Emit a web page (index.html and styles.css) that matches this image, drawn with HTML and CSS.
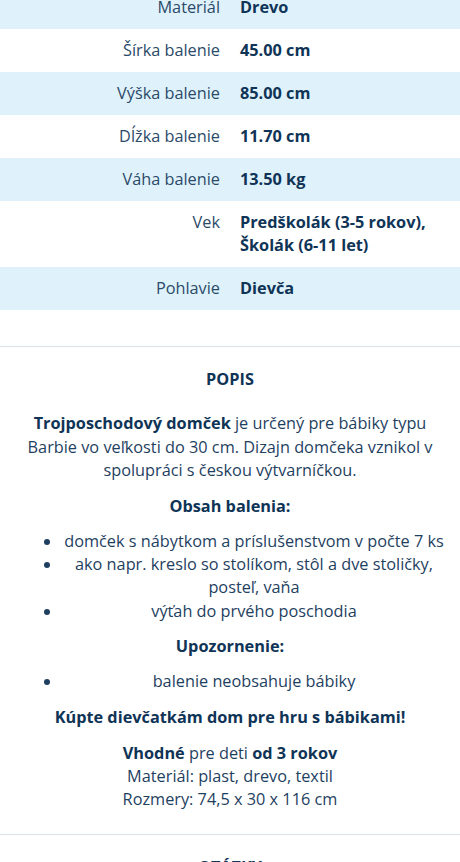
FILE: index.html
```html
<!DOCTYPE html>
<html lang="sk">
<head>
<meta charset="UTF-8"/>
<meta name="viewport" content="width=device-width, initial-scale=1.0"/>
<title>Trojposchodový domček</title>
<link rel="stylesheet" href="styles.css">
</head>
<body>
<div class="params">
  <div class="row alt"><div class="label">Materiál</div><div class="value">Drevo</div></div>
  <div class="row"><div class="label">Šírka balenie</div><div class="value">45.00 cm</div></div>
  <div class="row alt"><div class="label">Výška balenie</div><div class="value">85.00 cm</div></div>
  <div class="row"><div class="label">Dĺžka balenie</div><div class="value">11.70 cm</div></div>
  <div class="row alt"><div class="label">Váha balenie</div><div class="value">13.50 kg</div></div>
  <div class="row"><div class="label">Vek</div><div class="value">Predškolák (3-5 rokov), Školák (6-11 let)</div></div>
  <div class="row alt"><div class="label">Pohlavie</div><div class="value">Dievča</div></div>
</div>

<section class="desc">
  <h2>POPIS</h2>
  <p><strong>Trojposchodový domček</strong> je určený pre bábiky typu Barbie vo veľkosti do 30 cm. Dizajn domčeka vznikol v spolupráci s českou výtvarníčkou.</p>
  <h3>Obsah balenia:</h3>
  <ul>
    <li>domček s nábytkom a príslušenstvom v počte 7 ks</li>
    <li>ako napr. kreslo so stolíkom, stôl a dve stoličky, posteľ, vaňa</li>
    <li>výťah do prvého poschodia</li>
  </ul>
  <h3>Upozornenie:</h3>
  <ul>
    <li>balenie neobsahuje bábiky</li>
  </ul>
  <h3>Kúpte dievčatkám dom pre hru s bábikami!</h3>
  <p><strong>Vhodné</strong> pre deti <strong>od 3 rokov</strong><br>Materiál: plast, drevo, textil<br>Rozmery: 74,5 x 30 x 116 cm</p>
</section>

<section class="desc">
  <h2>OTÁZKY</h2>
</section>
</body>
</html>
```

FILE: styles.css
```css
body{margin:0;font-family:"Open Sans",sans-serif;font-size:16.3px;line-height:23.3px;color:#1f3f5f;background:#fff;}
.params{margin-top:-14px;padding-bottom:36px;}
.row{display:grid;grid-template-columns:1fr 1fr;padding:10px 0 9.7px;}
.row.alt{background:#dff2fc;}
.label{text-align:right;padding:0 10px;color:#2b4a68;}
.value{padding:0 20px 0 10px;font-weight:700;color:#0f3456;}
.desc{border-top:1px solid #d8e3e8;padding:21px 14px 10px;text-align:center;}
.desc h2{margin:0 0 21px;font-size:16.3px;font-weight:700;color:#0f3456;}
.desc h3{margin:12.5px 0 11.5px;font-size:16.3px;font-weight:700;color:#0f3456;}
.desc p{margin:12.5px 0;}
.desc strong{color:#0f3456;}
.desc ul{margin:11.5px 0 12.5px;padding-left:48px;}
```
